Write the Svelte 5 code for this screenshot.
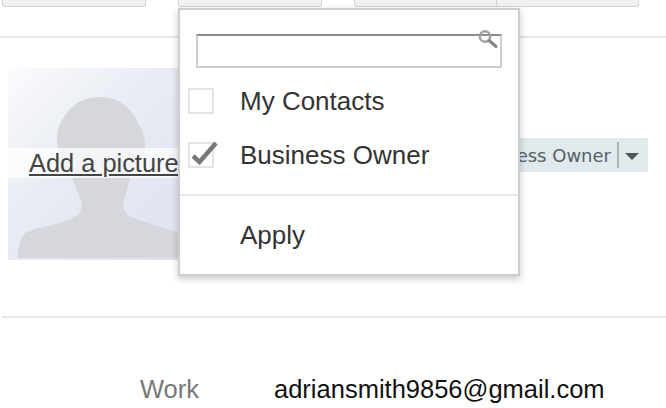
<script>
  const items = [
    { label: 'My Contacts', checked: false },
    { label: 'Business Owner', checked: true }
  ];
</script>

<div class="page">
  <div class="toolbar">
    <div class="btn first"></div>
    <div class="btn second"></div>
    <div class="btn split"><span class="seg"></span><span class="seg"></span></div>
  </div>
  <hr class="rule top-rule" />

  <div class="profile">
    <div class="photo">
      <svg class="silhouette" viewBox="0 0 192 192" aria-hidden="true">
        <defs>
          <linearGradient id="bg" x1="0" y1="0" x2="1" y2="1">
            <stop offset="0" stop-color="#fafbfc" />
            <stop offset="0.4" stop-color="#e9ecf4" />
            <stop offset="1" stop-color="#dde1ee" />
          </linearGradient>
        </defs>
        <rect width="192" height="192" fill="url(#bg)" />
        <path fill="#d5d7dd" d="M10 190 C10 180 12 171 17 165 C24 161 32 160 40 158 C48 156 55 154 60 152 C68 149 72 146 73 141 C74 138 74 136 74 135 L69 122 L64 110 C56 100 50 90 49 72 C49 60 52 52 64 39 C72 32 82 29 92 29 C102 29 108 31 114 35 C122 41 127 48 130 55 C134 62 137 68 137 76 C137 90 130 100 122 110 L119 122 L115 135 C115 140 117 145 121 148 L130 152 C144 156 158 160 170 165 L192 171 L192 190 Z" />
      </svg>
      <a class="add" href="#add">Add a picture</a>
    </div>
    <div class="chip"><span class="chip-text">Business Owner</span><i class="chip-sep"></i><i class="caret"></i></div>
  </div>

  <hr class="rule low-rule" />

  <div class="email-row">
    <span class="kind">Work</span>
    <span class="email">adriansmith9856@gmail.com</span>
  </div>

  <div class="menu">
    <div class="search">
      <svg class="lens" viewBox="0 0 22 20" aria-hidden="true">
        <circle cx="8" cy="7.5" r="5.2" fill="none" stroke="#a0a0a0" stroke-width="2.4" />
        <path d="M12 11.5 L19 17.5" stroke="#858585" stroke-width="3" stroke-linecap="round" />
      </svg>
    </div>
    <ul class="options">
      {#each items as item}
        <li class="option">
          <span class="box">
            {#if item.checked}
              <svg class="tick" viewBox="0 0 30 30" aria-hidden="true">
                <path d="M4 20 L10.500 26 L27 7" fill="none" stroke="#787878" stroke-width="4.500" />
              </svg>
            {/if}
          </span>
          <span>{item.label}</span>
        </li>
      {/each}
    </ul>
    <div class="divider"></div>
    <div class="apply">Apply</div>
  </div>
</div>

<style>
  :global(body) {
    margin: 0;
    background: #fff;
    font-family: "Liberation Sans", Arial, sans-serif;
  }
  .page {
    position: relative;
    width: 666px;
    height: 408px;
    overflow: hidden;
  }
  .toolbar {
    display: flex;
    height: 7px;
    padding-left: 2px;
    gap: 32px;
  }
  .btn {
    box-sizing: border-box;
    height: 7px;
    background: #f1f1f1;
    border: 1px solid #d4d4d4;
    border-top: 0;
    border-radius: 0 0 3px 3px;
  }
  .first, .second { width: 144px; }
  .split {
    width: 285px;
    display: flex;
  }
  .seg { flex: 1; }
  .seg:first-child { border-right: 1px solid #d4d4d4; }
  .rule {
    border: 0;
    height: 2px;
    background: #e6e6e6;
    margin: 0;
  }
  .top-rule { margin-top: 29px; }
  .profile {
    position: relative;
    height: 192px;
    margin-top: 30px;
    padding-left: 8px;
    display: flex;
    justify-content: space-between;
  }
  .photo {
    position: relative;
    width: 192px;
    height: 192px;
  }
  .silhouette {
    display: block;
    width: 192px;
    height: 192px;
  }
  .add {
    position: absolute;
    left: 0;
    right: 0;
    top: 80px;
    height: 30px;
    line-height: 30px;
    padding-left: 21px;
    background: rgba(255, 255, 255, 0.72);
    color: #444;
    font-size: 25.4px;
    white-space: nowrap;
  }
  .chip {
    box-sizing: border-box;
    margin: 70px 18px 0 0;
    height: 34px;
    background: #e0e9ec;
    color: #56626a;
    font-family: "DejaVu Sans", sans-serif;
    font-size: 18px;
    display: flex;
    align-items: center;
    padding-left: 8px;
    padding-right: 9px;
    width: 190px;
    justify-content: flex-end;
    white-space: nowrap;
  }
  .chip-sep {
    flex: none;
    width: 2px;
    height: 26px;
    margin: 0 6px;
    background: #a9b0b4;
  }
  .caret {
    flex: none;
    width: 0;
    height: 0;
    border-left: 7px solid transparent;
    border-right: 7px solid transparent;
    border-top: 7px solid #50565c;
    margin-top: 3px;
  }
  .low-rule { margin: 56px 0 0 2px; }
  .email-row {
    display: flex;
    margin-top: 56px;
    font-size: 25.5px;
    line-height: 30px;
  }
  .kind {
    width: 134px;
    margin-left: 140px;
    color: #777;
  }
  .email { color: #111; }
  .menu {
    position: absolute;
    left: 178px;
    top: 8px;
    box-sizing: border-box;
    width: 342px;
    height: 268px;
    background: #fff;
    border: 2px solid #cdcdcd;
    box-shadow: 0 3px 7px rgba(0, 0, 0, 0.22);
    color: #333;
    font-size: 26px;
  }
  .search {
    position: relative;
    box-sizing: border-box;
    margin: 24px 0 0 16px;
    width: 306px;
    height: 34px;
    border: 2px solid #cfcfcf;
    border-top-color: #8a8a8a;
  }
  .lens {
    position: absolute;
    right: 1px;
    top: -7px;
    width: 22px;
    height: 20px;
  }
  .options {
    list-style: none;
    margin: 6px 0 0;
    padding: 0;
  }
  .option {
    display: flex;
    align-items: center;
    height: 54px;
    padding-left: 8px;
    gap: 26px;
  }
  .box {
    position: relative;
    box-sizing: border-box;
    width: 26px;
    height: 26px;
    border: 2px solid #e4e4e4;
  }
  .tick {
    position: absolute;
    left: -1px;
    top: -8px;
    width: 30px;
    height: 30px;
  }
  .divider {
    height: 2px;
    margin-top: 12px;
    background: #e6e6e6;
  }
  .apply {
    margin-top: 24px;
    padding-left: 60px;
    line-height: 30px;
  }
</style>
